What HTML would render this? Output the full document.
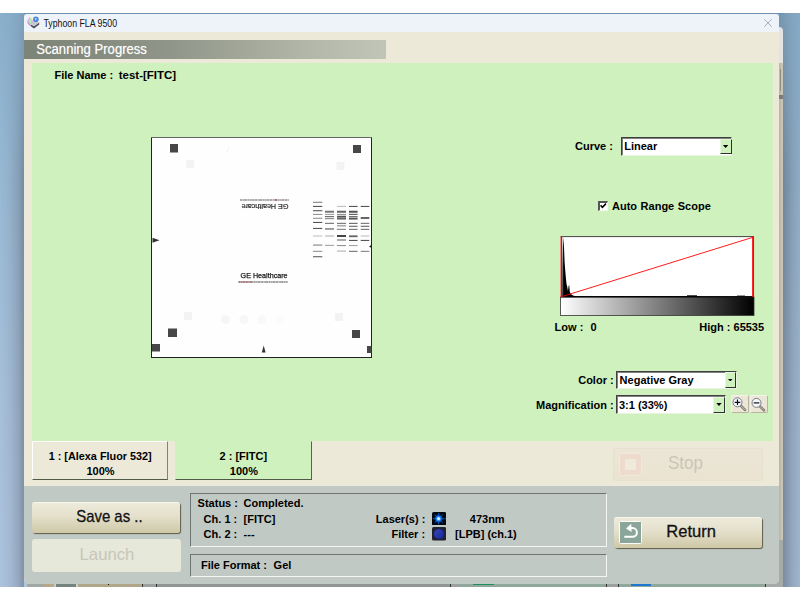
<!DOCTYPE html>
<html><head><meta charset="utf-8"><title>Typhoon FLA 9500</title>
<style>
html,body{margin:0;padding:0;}
body{width:800px;height:600px;overflow:hidden;background:#fff;position:relative;font-family:"Liberation Sans",sans-serif;}
div,span,svg{position:absolute;box-sizing:border-box;}
.t{white-space:pre;}
#desk{left:0;top:13px;width:800px;height:574px;overflow:hidden;background:linear-gradient(180deg,#8ab0cd 0%,#9cbbd6 35%,#a9c1db 70%,#adc4df 100%);}
#win{left:24px;top:13.7px;width:755.3px;height:570px;background:#ece9d8;border-radius:4px 4px 5px 6px;overflow:hidden;}
#winsh{left:24px;top:0.7px;width:755.3px;height:570px;border-radius:4px 4px 7px 7px;}
#shl{left:0;top:0;width:24px;height:574px;background:linear-gradient(90deg,rgba(50,55,65,0) 0%,rgba(50,55,65,.07) 40%,rgba(50,55,65,.19) 75%,rgba(50,55,65,.36) 100%);-webkit-mask-image:linear-gradient(180deg,rgba(0,0,0,.4) 0,#000 170px);mask-image:linear-gradient(180deg,rgba(0,0,0,.4) 0,#000 170px);}
#shr{left:779px;top:0;width:21px;height:574px;background:linear-gradient(270deg,rgba(50,55,65,.1) 0%,rgba(50,55,65,.2) 36%,rgba(50,55,65,.4) 81%,rgba(50,55,65,.45) 100%);-webkit-mask-image:linear-gradient(180deg,rgba(0,0,0,.45) 0,#000 170px);mask-image:linear-gradient(180deg,rgba(0,0,0,.45) 0,#000 170px);}
#sht{left:24px;top:0;width:760px;height:1px;background:#6f8fb0;}
#title{left:0;top:0;width:100%;height:18.8px;background:#eef3fa;}
#hdr{left:0;top:26.3px;width:362px;height:19px;background:linear-gradient(90deg,#7c8377 0%,#8f9588 40%,#b4b8aa 80%,#c1c5b8 100%);}
#green{left:8px;top:49.3px;width:741px;height:378px;background:#cef1bd;}
#gray{left:0;top:472.3px;width:100%;height:100px;background:#c1c9c5;}
.sunk{border:1px solid;border-color:#6f7572 #f4f6f4 #f4f6f4 #6f7572;}
.combo{background:#fff;border:1px solid;border-color:#404040 #e8f4e0 #e8f4e0 #404040;box-shadow:inset 1px 1px 0 #808080;}
.dd{background:#cef1bd;border:1px solid;border-color:#e8f8e0 #303030 #303030 #e8f8e0;}
.dd:after{content:"";position:absolute;left:1.9px;top:5.5px;width:5.4px;height:2.9px;background:#000;clip-path:polygon(0 0,100% 0,50% 100%);}
.btn{border-radius:3px;background:linear-gradient(180deg,#eeebdc 0%,#e4e0cc 45%,#cfc8a7 100%);box-shadow:1px 1px 1px rgba(60,55,30,.75), inset 0 1px 0 rgba(255,255,255,.5);}
</style></head><body>
<div id="desk"><div id="shl"></div><div id="shr"></div><div id="sht"></div><div style="left:776px;top:13.8px;width:7.2px;height:37.2px;background:#e3e3e3;border-radius:0 4px 0 0;"></div><div style="left:776px;top:50.0px;width:7.2px;height:477.0px;background:#c9c5b5;"></div><div style="left:776px;top:526.7px;width:7.2px;height:47.1px;background:#a5aca8;"></div><div style="left:779.3px;top:50.0px;width:1.3px;height:477.0px;background:#bcb9aa;"></div><div style="left:779.6px;top:56.0px;width:1.6px;height:22.0px;background:#8d8d86;border-radius:1px;"></div><div style="left:779.4px;top:81.5px;width:3.8px;height:4.5px;background:#7b7b7b;"></div><div style="left:27px;top:567.0px;width:756.2px;height:6.8px;background:#a5aca8;"></div><div style="left:27.5px;top:570.0px;width:16.2px;height:3.8px;background:#a0a8a4;"></div><div style="left:43.7px;top:570.0px;width:10.0px;height:3.8px;background:#b5a98a;"></div><div style="left:53.7px;top:570.0px;width:2.3px;height:3.8px;background:#c9cdc4;"></div><div style="left:56px;top:570.0px;width:20.2px;height:3.8px;background:#74847e;"></div><div style="left:76.2px;top:570.0px;width:1.8px;height:3.8px;background:#c9cdc4;"></div><div style="left:78px;top:570.0px;width:64.0px;height:3.8px;background:#b1a687;"></div><div style="left:142px;top:570.0px;width:1.0px;height:3.8px;background:#333;"></div><div style="left:143px;top:570.0px;width:13.0px;height:3.8px;background:#9aa19e;"></div><div style="left:156px;top:570.0px;width:1.0px;height:3.8px;background:#333;"></div><div style="left:157px;top:570.0px;width:293.0px;height:3.8px;background:#8f9693;"></div><div style="left:450px;top:570.0px;width:1.0px;height:3.8px;background:#333;"></div><div style="left:451px;top:570.0px;width:8.0px;height:3.8px;background:#9aa19e;"></div><div style="left:459px;top:570.0px;width:147.0px;height:3.8px;background:#8fa89b;"></div><div style="left:606px;top:570.0px;width:1.0px;height:3.8px;background:#333;"></div><div style="left:607px;top:570.0px;width:11.0px;height:3.8px;background:#9aa19e;"></div><div style="left:618px;top:570.0px;width:1.0px;height:3.8px;background:#333;"></div><div style="left:619px;top:570.0px;width:146.0px;height:3.8px;background:#8fa89b;"></div><div style="left:765px;top:570.0px;width:1.0px;height:3.8px;background:#333;"></div><div style="left:766px;top:570.0px;width:17.2px;height:3.8px;background:#a5aca8;"></div><div style="left:107.5px;top:570.5px;width:1.5px;height:1.5px;background:#111;"></div><div style="left:472.5px;top:570.5px;width:21.0px;height:1.7px;background:#1f8f5f;"></div><div style="left:631px;top:570.5px;width:20.0px;height:2.1px;background:#1f78d0;"></div></div>

<div id="win">
<div id="title"></div><div id="hdr"></div><div id="green"></div><div id="gray"></div>
</div>
<div id="ov" style="left:0;top:0;width:800px;height:600px;">
<span class="t" style="left:43px;top:19px;font-size:9px;line-height:9px;color:#111;transform:translate(0.40px,0.80px) rotate(0.02deg) scale(0.975,1.12);transform-origin:0 7px;">Typhoon FLA 9500</span>
<svg style="left:764px;top:19px" width="8" height="8" viewBox="0 0 8 8"><path d="M0.3 0.3L7.7 7.7M7.7 0.3L0.3 7.7" stroke="#9a9ea4" stroke-width="0.8" fill="none"/></svg>
<svg style="left:25.5px;top:16px" width="14" height="13.5" viewBox="0 0 14 13.5">
<path d="M0.8 6.2L4.2 9.8L8 12.4L13.2 8.6L13.2 6.6L8 10.2Z" fill="#4a4d52"/>
<path d="M4 6.5L9.5 4.2L13.2 6.6L8 10.2Z" fill="#c4c7cc"/>
<path d="M0.8 5.5L3.8 1L7.6 4.2L4.6 10Z" fill="#e6a8ec"/>
<path d="M2.2 5.3L4.2 2.2L6.4 4.3L4.6 8.2Z" fill="#a8ecb0"/>
<path d="M3.6 1.2L5 0.6L7.6 4.2L6.4 4.3Z" fill="#f4f0c0"/>
<circle cx="9.9" cy="3.3" r="2.8" fill="#4a88da"/>
<path d="M8.8 2.4L10.9 2.2L9.6 4.4Z" fill="#e8f2ff"/>
</svg>
<span class="t" style="left:36px;top:41px;font-size:14px;line-height:14px;color:#fff;transform:translate(0.30px,0.90px) rotate(0.02deg) scale(0.935,1);transform-origin:0 12px;text-shadow:0 0 1px rgba(255,255,255,.5);">Scanning Progress</span>
<span class="t" style="left:54px;top:70px;font-size:11px;line-height:11px;color:#000;font-weight:bold;transform:translate(0.50px,0.30px) rotate(0.02deg);transform-origin:0 9px;">File Name :</span>
<span class="t" style="left:118px;top:70px;font-size:11px;line-height:11px;color:#000;font-weight:bold;transform:translate(0.70px,0.30px) rotate(0.02deg) scale(1.045,1);transform-origin:0 9px;">test-[FITC]</span>
<svg style="left:151px;top:137px" width="221" height="221" viewBox="151 137 221 221"><defs><filter id="bl" x="-5%" y="-5%" width="110%" height="110%"><feGaussianBlur stdDeviation="0.3"/></filter></defs><rect x="151.5" y="137.5" width="220" height="220" fill="#fefefe" stroke="#222" stroke-width="1"/><line x1="151" y1="137.5" x2="372" y2="137.5" stroke="#666" stroke-width="1"/><rect x="170" y="144" width="8" height="8.5" fill="#474747"/><rect x="353" y="145" width="8" height="8" fill="#474747"/><rect x="168" y="328.5" width="9" height="8.5" fill="#474747"/><rect x="352" y="330" width="8" height="8" fill="#474747"/><rect x="152" y="344" width="8" height="7.5" fill="#474747"/><rect x="367" y="346" width="4.5" height="7" fill="#474747"/><rect x="186" y="160" width="8" height="8" fill="#f3f3f3"/><rect x="336.5" y="162" width="8" height="8" fill="#f3f3f3"/><rect x="184" y="312" width="8" height="8" fill="#f3f3f3"/><rect x="335" y="313" width="8" height="8" fill="#f3f3f3"/><circle cx="225.4" cy="319.6" r="4.6" fill="#f6f6f6"/><circle cx="243.8" cy="319.6" r="4.6" fill="#f7f7f7"/><circle cx="262" cy="319.6" r="4.6" fill="#f9f9f9"/><circle cx="279.7" cy="319.6" r="4.6" fill="#fcfcfc"/><path d="M152.5 237.8L159.5 240.3L152.5 242.8Z" fill="#333"/><path d="M263.7 345.5L261.8 352.5L265.6 352.5Z" fill="#333"/><path d="M371 245L369 246.4L371 247.8Z" fill="#333"/><line x1="226.5" y1="152.5" x2="229" y2="147.5" stroke="#f0f0f0" stroke-width="1"/><g filter="url(#bl)"><text x="240.6" y="278.3" font-family="Liberation Sans, sans-serif" font-size="7" fill="#1c1c1c" stroke="#1c1c1c" stroke-width="0.25" textLength="47" lengthAdjust="spacingAndGlyphs">GE Healthcare</text><line x1="238.5" y1="282" x2="288" y2="282" stroke="#4a4a4a" stroke-width="1.1" stroke-dasharray="2.2 0.4 1.2 0.3 3 0.4"/><line x1="238.5" y1="282" x2="252" y2="282" stroke="#a44" stroke-width="1.1" stroke-dasharray="1.5 0.4" opacity=".7"/><g transform="rotate(180 264.7 206.3)"><text x="241" y="208.8" font-family="Liberation Sans, sans-serif" font-size="7" fill="#2a2a2a" stroke="#2a2a2a" stroke-width="0.2" textLength="47" lengthAdjust="spacingAndGlyphs">GE Healthcare</text></g><line x1="240" y1="200" x2="289" y2="200" stroke="#5a5a5a" stroke-width="1.1" stroke-dasharray="2.2 0.4 1.2 0.3 3 0.4"/><line x1="275" y1="200" x2="277" y2="200" stroke="#c33" stroke-width="1.1"/><rect x="313" y="201.77" width="9.3" height="1" fill="#777"/><rect x="313" y="205.90" width="9.3" height="1" fill="#444"/><rect x="313" y="210.07" width="9.3" height="1.2" fill="#666"/><rect x="313" y="213.90" width="9.3" height="1" fill="#888"/><rect x="313" y="217.77" width="9.3" height="1" fill="#888"/><rect x="313" y="221.90" width="9.3" height="1" fill="#444"/><rect x="313" y="227.90" width="9.3" height="1" fill="#444"/><rect x="313" y="235.50" width="9.3" height="1" fill="#bbb"/><rect x="313" y="244.57" width="9.3" height="1" fill="#777"/><rect x="313" y="250.83" width="9.3" height="1" fill="#888"/><rect x="313" y="256.02" width="9.3" height="1.3" fill="#777"/><rect x="325" y="210.73" width="9.0" height="2" fill="#777"/><rect x="325" y="213.90" width="9.0" height="1" fill="#999"/><rect x="325" y="216.17" width="9.0" height="1" fill="#555"/><rect x="325" y="218.17" width="9.0" height="1" fill="#777"/><rect x="325" y="222.83" width="9.0" height="1" fill="#666"/><rect x="325" y="228.13" width="9.0" height="1.6" fill="#888"/><rect x="325" y="235.50" width="9.0" height="1" fill="#aaa"/><rect x="325" y="244.83" width="9.0" height="1" fill="#999"/><rect x="337" y="205.90" width="9.0" height="1" fill="#bbb"/><rect x="337" y="210.73" width="9.0" height="2" fill="#666"/><rect x="337" y="213.90" width="9.0" height="1" fill="#888"/><rect x="337" y="215.77" width="9.0" height="1.8" fill="#555"/><rect x="337" y="217.77" width="9.0" height="1.8" fill="#666"/><rect x="337" y="222.83" width="9.0" height="1" fill="#666"/><rect x="337" y="224.93" width="9.0" height="1.6" fill="#aaa"/><rect x="337" y="228.83" width="9.0" height="1" fill="#777"/><rect x="337" y="235.00" width="9.0" height="2" fill="#444"/><rect x="337" y="239.20" width="9.0" height="1.6" fill="#999"/><rect x="337" y="245.10" width="9.0" height="1" fill="#888"/><rect x="337" y="250.57" width="9.0" height="1" fill="#aaa"/><rect x="349" y="205.90" width="8.6" height="1" fill="#444"/><rect x="349" y="210.73" width="8.6" height="2" fill="#555"/><rect x="349" y="213.80" width="8.6" height="1.2" fill="#666"/><rect x="349" y="216.07" width="8.6" height="1.2" fill="#666"/><rect x="349" y="217.77" width="8.6" height="1.8" fill="#555"/><rect x="349" y="222.83" width="8.6" height="1" fill="#555"/><rect x="349" y="225.77" width="8.6" height="1" fill="#555"/><rect x="349" y="228.83" width="8.6" height="1" fill="#666"/><rect x="349" y="235.37" width="8.6" height="1.8" fill="#666"/><rect x="349" y="239.90" width="8.6" height="1" fill="#444"/><rect x="349" y="245.10" width="8.6" height="1" fill="#999"/><rect x="349" y="250.83" width="8.6" height="1" fill="#666"/><rect x="360.7" y="205.90" width="8.6" height="1" fill="#444"/><rect x="360.7" y="217.00" width="8.6" height="2" fill="#666"/><rect x="360.7" y="222.83" width="8.6" height="1" fill="#666"/><rect x="360.7" y="225.77" width="8.6" height="1" fill="#555"/><rect x="360.7" y="228.83" width="8.6" height="1" fill="#666"/><rect x="360.7" y="235.50" width="8.6" height="1" fill="#bbb"/><rect x="360.7" y="239.90" width="8.6" height="1" fill="#444"/><rect x="360.7" y="250.83" width="8.6" height="1" fill="#777"/></g></svg>
<span class="t" style="left:575px;top:140px;font-size:11px;line-height:11px;color:#000;font-weight:bold;transform:translate(0.00px,0.80px) rotate(0.02deg);transform-origin:0 9px;">Curve :</span>
<div class="combo" style="left:620.7px;top:137px;width:111.5px;height:18.6px"></div>
<div class="dd" style="left:720px;top:138.5px;width:11.5px;height:15.5px"></div>
<span class="t" style="left:624px;top:140px;font-size:11px;line-height:11px;color:#000;font-weight:bold;transform:translate(0.20px,0.80px) rotate(0.02deg);transform-origin:0 9px;">Linear</span>
<div style="left:598px;top:201px;width:10.2px;height:10px;background:#fff;border-style:solid;border-width:2px 1px 1px 2px;border-color:#555 #f4f4f4 #f4f4f4 #555"></div>
<svg style="left:598px;top:201px" width="10" height="10" viewBox="0 0 10 10"><path d="M2.6 4.3L4.4 6.3L8 2.6" stroke="#000" stroke-width="1.6" fill="none"/></svg>
<span class="t" style="left:612px;top:201px;font-size:11px;line-height:11px;color:#000;font-weight:bold;transform:translate(0.00px,0.10px) rotate(0.02deg);transform-origin:0 9px;word-spacing:0.5px;">Auto Range Scope</span>
<svg style="left:555px;top:230px" width="205" height="90" viewBox="555 230 205 90"><defs><linearGradient id="gr" x1="0" x2="1" y1="0" y2="0"><stop offset="0" stop-color="#fff"/><stop offset="1" stop-color="#000"/></linearGradient></defs><rect x="560.6" y="236.4" width="193.4" height="61" fill="#fff"/><rect x="560.6" y="297" width="193.4" height="18.4" fill="url(#gr)" stroke="#333" stroke-width="0.8"/><line x1="560.6" y1="236.6" x2="754" y2="236.6" stroke="#444" stroke-width="1"/><path d="M562 297L562.3 268L562.9 246L563.4 237.6L564 247L564.6 262L565.2 270L565.8 277L566.5 284L567.3 287L567.9 291L568.6 286L569.2 285L569.8 292L570.8 294L573 295.5L576 296.3L700 296.3L700 297Z" fill="#000"/><line x1="562.7" y1="237" x2="562.7" y2="297" stroke="#999" stroke-width="0.6"/><rect x="561" y="296.1" width="193" height="1.3" fill="#000"/><rect x="687" y="295.3" width="10" height="1" fill="#000"/><rect x="737" y="295.6" width="8" height="0.8" fill="#000"/><line x1="561.2" y1="296.8" x2="753.2" y2="237.2" stroke="#f00" stroke-width="0.9"/><line x1="561.3" y1="236.4" x2="561.3" y2="297" stroke="#f00" stroke-width="1.4"/><line x1="753.1" y1="236.4" x2="753.1" y2="297" stroke="#f00" stroke-width="1.9"/></svg>
<span class="t" style="left:554px;top:321px;font-size:11px;line-height:11px;color:#000;font-weight:bold;transform:translate(0.60px,0.50px) rotate(0.02deg);transform-origin:0 9px;">Low :</span>
<span class="t" style="left:590px;top:321px;font-size:11px;line-height:11px;color:#000;font-weight:bold;transform:translate(0.60px,0.50px) rotate(0.02deg);transform-origin:0 9px;">0</span>
<span class="t" style="left:699px;top:321px;font-size:11px;line-height:11px;color:#000;font-weight:bold;transform:translate(0.30px,0.50px) rotate(0.02deg);transform-origin:0 9px;">High : 65535</span>
<span class="t" style="left:578px;top:374px;font-size:11px;line-height:11px;color:#000;font-weight:bold;transform:translate(0.20px,0.50px) rotate(0.02deg);transform-origin:0 9px;">Color :</span>
<div class="combo" style="left:616px;top:370.6px;width:121px;height:18.4px"></div>
<div class="dd" style="left:724.7px;top:372px;width:11.5px;height:15.7px"></div>
<span class="t" style="left:619px;top:374px;font-size:11px;line-height:11px;color:#000;font-weight:bold;transform:translate(0.60px,0.50px) rotate(0.02deg);transform-origin:0 9px;">Negative Gray</span>
<span class="t" style="left:536px;top:400px;font-size:11px;line-height:11px;color:#000;font-weight:bold;transform:translate(0.00px,0.10px) rotate(0.02deg);transform-origin:0 9px;">Magnification :</span>
<div class="combo" style="left:616px;top:395.2px;width:109.7px;height:19px"></div>
<div class="dd" style="left:713.4px;top:396.6px;width:11.5px;height:16.3px"></div>
<span class="t" style="left:619px;top:400px;font-size:11px;line-height:11px;color:#000;font-weight:bold;transform:translate(0.00px,0.10px) rotate(0.02deg);transform-origin:0 9px;">3:1 (33%)</span>
<div style="left:731px;top:395px;width:18px;height:18px;background:#ece6d6;border-radius:2px;border:1px solid;border-color:#f6f3ea #b9b29c #b9b29c #f6f3ea"></div>
<svg style="left:731px;top:395.5px" width="18" height="18" viewBox="0 0 18 18"><path d="M10 9.8L14 13.8" stroke="#77776e" stroke-width="2.6" stroke-linecap="round"/><path d="M10.3 10.1L13.8 13.6" stroke="#c9c9c0" stroke-width="1" stroke-linecap="round"/><circle cx="6.5" cy="6.3" r="4.5" fill="#f2f7fc" stroke="#7a7f86" stroke-width="1"/><path d="M3.7 6.3H9.3M6.5 3.5V9.1" stroke="#111" stroke-width="1.2"/></svg>
<div style="left:749.5px;top:395px;width:18px;height:18px;background:#ece6d6;border-radius:2px;border:1px solid;border-color:#f6f3ea #b9b29c #b9b29c #f6f3ea"></div>
<svg style="left:749.5px;top:395.5px" width="18" height="18" viewBox="0 0 18 18"><path d="M10 10.4L14 14.4" stroke="#77776e" stroke-width="2.6" stroke-linecap="round"/><path d="M10.3 10.7L13.8 14.2" stroke="#c9c9c0" stroke-width="1" stroke-linecap="round"/><circle cx="6.5" cy="6.9" r="4.5" fill="#f2f7fc" stroke="#7a7f86" stroke-width="1"/><path d="M3.7 6.9H9.3" stroke="#111" stroke-width="1.2"/></svg>
<div style="left:32px;top:441px;width:136px;height:39px;background:#ece9d8;border:1px solid;border-color:#fff #7d8574 #4f5a48 #fff"></div>
<div style="left:175px;top:441px;width:137px;height:39px;background:#cef1bd;border:1px solid;border-color:#cef1bd #56614f #4f5a48 #cef1bd"></div>
<span class="t" style="left:48px;top:451px;font-size:11px;line-height:11px;color:#000;font-weight:bold;transform:translate(0.70px,0.10px) rotate(0.02deg) scale(0.985,1);transform-origin:0 9px;">1 : [Alexa Fluor 532]</span>
<span class="t" style="left:86px;top:466px;font-size:11px;line-height:11px;color:#000;font-weight:bold;transform:translate(0.50px,0.10px) rotate(0.02deg);transform-origin:0 9px;">100%</span>
<span class="t" style="left:219px;top:451px;font-size:11px;line-height:11px;color:#000;font-weight:bold;transform:translate(0.50px,0.10px) rotate(0.02deg);transform-origin:0 9px;">2 : [FITC]</span>
<span class="t" style="left:229px;top:466px;font-size:11px;line-height:11px;color:#000;font-weight:bold;transform:translate(0.80px,0.10px) rotate(0.02deg);transform-origin:0 9px;">100%</span>
<div style="left:613px;top:448px;width:150px;height:32.5px;border-radius:3px;background:linear-gradient(180deg,#ece6d7,#eae3d2);border:1px solid #e7e0d0"></div>
<div style="left:618.9px;top:452.6px;width:23px;height:23.2px;background:#efdbce;border:1.5px solid #f0eadc;border-radius:2px"></div>
<div style="left:624.8px;top:458.6px;width:11.4px;height:11.4px;background:#efeadb"></div>
<span class="t" style="left:668px;top:455px;font-size:17.5px;line-height:17.5px;color:#c9c6b6;transform:translate(0.00px,0.10px) rotate(0.02deg) scale(0.972,1);transform-origin:0 14px;">Stop</span>
<div class="btn" style="left:31.7px;top:501.8px;width:148.5px;height:31px"></div>
<span class="t" style="left:76px;top:508px;font-size:17px;line-height:17px;color:#111;transform:translate(0.20px,0.30px) rotate(0.02deg) scale(0.878,1);transform-origin:0 14px;-webkit-text-stroke:0.3px #111;">Save as ..</span>
<div style="left:31.7px;top:538.5px;width:149.5px;height:33.3px;border-radius:3px;background:#e6e8d9"></div>
<span class="t" style="left:79px;top:546px;font-size:16.5px;line-height:16.5px;color:#c8c6b9;transform:translate(0.60px,0.20px) rotate(0.02deg) scale(1.01,1);transform-origin:0 14px;">Launch</span>
<div class="sunk" style="left:190px;top:493px;width:416.5px;height:54px"></div>
<div class="sunk" style="left:190px;top:553.6px;width:416.5px;height:23px"></div>
<span class="t" style="left:197px;top:497px;font-size:11px;line-height:11px;color:#000;font-weight:bold;transform:translate(0.60px,0.90px) rotate(0.02deg);transform-origin:0 9px;">Status :</span>
<span class="t" style="left:243px;top:497px;font-size:11px;line-height:11px;color:#000;font-weight:bold;transform:translate(0.60px,0.90px) rotate(0.02deg);transform-origin:0 9px;">Completed.</span>
<span class="t" style="left:203px;top:514px;font-size:11px;line-height:11px;color:#000;font-weight:bold;transform:translate(0.60px,0.30px) rotate(0.02deg);transform-origin:0 9px;">Ch. 1 :</span>
<span class="t" style="left:243px;top:514px;font-size:11px;line-height:11px;color:#000;font-weight:bold;transform:translate(0.60px,0.30px) rotate(0.02deg);transform-origin:0 9px;">[FITC]</span>
<span class="t" style="left:203px;top:529px;font-size:11px;line-height:11px;color:#000;font-weight:bold;transform:translate(0.60px,0.00px) rotate(0.02deg);transform-origin:0 9px;">Ch. 2 :</span>
<span class="t" style="left:243px;top:529px;font-size:11px;line-height:11px;color:#000;font-weight:bold;transform:translate(0.60px,0.00px) rotate(0.02deg);transform-origin:0 9px;">---</span>
<span class="t" style="left:201px;top:559px;font-size:11px;line-height:11px;color:#000;font-weight:bold;transform:translate(0.00px,0.90px) rotate(0.02deg);transform-origin:0 9px;">File Format :</span>
<span class="t" style="left:273px;top:559px;font-size:11px;line-height:11px;color:#000;font-weight:bold;transform:translate(0.60px,0.90px) rotate(0.02deg);transform-origin:0 9px;">Gel</span>
<span class="t" style="left:375px;top:514px;font-size:11px;line-height:11px;color:#000;font-weight:bold;transform:translate(0.80px,0.30px) rotate(0.02deg);transform-origin:0 9px;">Laser(s) :</span>
<span class="t" style="left:469px;top:514px;font-size:11px;line-height:11px;color:#000;font-weight:bold;transform:translate(0.80px,0.30px) rotate(0.02deg);transform-origin:0 9px;">473nm</span>
<span class="t" style="left:391px;top:529px;font-size:11px;line-height:11px;color:#000;font-weight:bold;transform:translate(0.50px,0.20px) rotate(0.02deg);transform-origin:0 9px;">Filter :</span>
<span class="t" style="left:455px;top:529px;font-size:11px;line-height:11px;color:#000;font-weight:bold;transform:translate(0.00px,0.20px) rotate(0.02deg);transform-origin:0 9px;">[LPB] (ch.1)</span>
<svg style="left:432px;top:511.9px" width="14.2" height="13.6" viewBox="0 0 14.2 13.6"><defs><radialGradient id="lz"><stop offset="0" stop-color="#fff"/><stop offset=".18" stop-color="#d8f2ff"/><stop offset=".38" stop-color="#2a9cff"/><stop offset=".62" stop-color="#0a5fe0" stop-opacity=".85"/><stop offset="1" stop-color="#001a50" stop-opacity="0"/></radialGradient></defs><rect width="14.2" height="13.6" rx="1.6" fill="#02060f"/><g stroke="#0a78ff" stroke-width=".8" stroke-linecap="round"><path d="M6.6 1.4V12M1.2 6.7H12.2M2.9 3L10.3 10.4M10.3 3L2.9 10.4"/></g><circle cx="6.6" cy="6.7" r="5" fill="url(#lz)"/><circle cx="13.4" cy="6.7" r=".5" fill="#0a78ff"/></svg>
<svg style="left:432px;top:527.3px" width="14.2" height="13.5" viewBox="0 0 14.2 13.5"><defs><linearGradient id="fl" x1="0" y1="0" x2="1" y2="1"><stop offset="0" stop-color="#3648b4"/><stop offset="1" stop-color="#1626a0"/></linearGradient></defs><rect width="14.2" height="13.5" rx="1.6" fill="#23232f"/><circle cx="6.9" cy="6.9" r="5.2" fill="url(#fl)" stroke="#15196a" stroke-width=".6"/></svg>
<div class="btn" style="left:613.7px;top:516.7px;width:148.5px;height:31.3px"></div>
<div style="left:619px;top:520.7px;width:22.8px;height:23px;background:#8aa59a;border:1.5px solid #fcfcf8;border-radius:1.5px"></div>
<svg style="left:619px;top:520.8px" width="23" height="23" viewBox="0 0 23 23"><path d="M5.3 15.7H13.6A4.3 4.3 0 0 0 13.6 7.1H11" stroke="#fff" stroke-width="2" fill="none"/><path d="M7 7.4L12.3 2.8L12.6 11Z" fill="#fff"/></svg>
<span class="t" style="left:666px;top:522px;font-size:17px;line-height:17px;color:#111;transform:translate(0.20px,0.90px) rotate(0.02deg) scale(0.975,1);transform-origin:0 14px;-webkit-text-stroke:0.3px #111;">Return</span>
</div>
</body></html>
